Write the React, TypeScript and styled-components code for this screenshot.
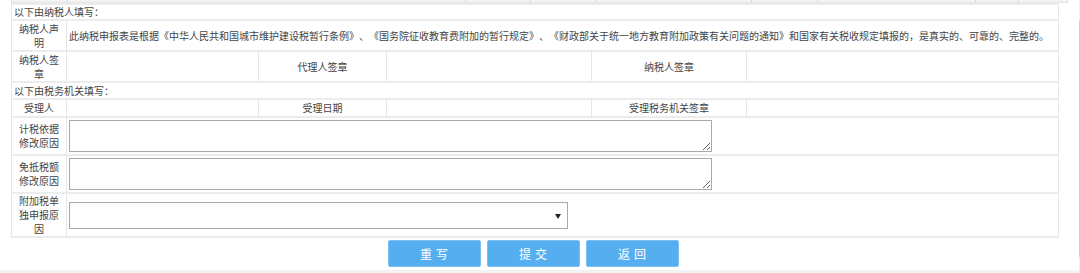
import React from "react";
import styled, { createGlobalStyle } from "styled-components";

const GlobalStyle = createGlobalStyle`
  html, body {
    margin: 0;
    padding: 0;
    background: #fff;
    overflow: hidden;
  }
  body {
    font-family: "Noto Sans CJK SC", "Noto Sans", sans-serif;
    color: #444;
    text-spacing-trim: space-all;
  }
`;

const colors = {
  line: "#e6e6e6",
  rowLine: "#ececec",
  outer: "#dcdcdc",
  field: "#a9a9a9",
  blue: "#55aef0",
};

const Page = styled.div`
  width: 1080px;
  height: 273px;
  display: flex;
  overflow: hidden;
`;

const Content = styled.div`
  flex: 1;
  display: flex;
  flex-direction: column;
  padding-left: 11px;
  padding-right: 11px;
`;

const PrevRow = styled.div`
  display: flex;
  height: 2px;
  background: #f3f3f3;
  border-bottom: 1px solid ${colors.line};
  border-left: 1px solid ${colors.outer};
  border-right: 1px solid ${colors.outer};
`;

const PrevCell = styled.div<{ $w: number }>`
  width: ${(p) => p.$w}px;
  flex: none;
  border-right: 1px solid #d8d8d8;
  &:last-child {
    border-right: none;
    flex: 1;
  }
`;

const Table = styled.table`
  width: 1048px;
  table-layout: fixed;
  border-collapse: collapse;
  font-size: 10px;
  line-height: 14px;
  border-left: 1px solid ${colors.outer};
  border-right: 1px solid ${colors.outer};
  border-bottom: 2px solid ${colors.rowLine};
`;

const Row = styled.tr<{ $h: number }>`
  height: ${(p) => p.$h}px;
`;

const Cell = styled.td<{ $align?: "left" | "center" }>`
  text-align: ${(p) => p.$align || "center"};
  vertical-align: middle;
  padding: 0 2px;
  border-left: 1px solid ${colors.line};
  border-right: 1px solid ${colors.line};
  border-top: 2px solid ${colors.rowLine};
  border-bottom: 2px solid ${colors.rowLine};
  white-space: nowrap;
  overflow: hidden;
`;

const Label = styled(Cell)`
  white-space: normal;
  padding: 0 3px;
  word-break: break-all;
  line-height: 14px;
`;

const Section = styled(Cell)`
  text-align: left;
  padding-left: 2px;
`;

const TextArea = styled.textarea`
  display: block;
  box-sizing: border-box;
  width: 643px;
  height: 32px;
  margin: 0;
  border: 1px solid ${colors.field};
  border-radius: 0;
  font: inherit;
  resize: both;
  background: #fff;
`;

const SelectWrap = styled.span`
  position: relative;
  display: block;
  width: 499px;
  height: 27px;
  &::after {
    content: "";
    position: absolute;
    right: 7px;
    top: 12px;
    border-left: 3px solid transparent;
    border-right: 3px solid transparent;
    border-top: 5px solid #222;
  }
`;

const Select = styled.select`
  appearance: none;
  box-sizing: border-box;
  width: 100%;
  height: 100%;
  margin: 0;
  border: 1px solid ${colors.field};
  border-radius: 0;
  background: #fff;
  font: inherit;
`;

const Actions = styled.div`
  display: flex;
  justify-content: center;
  gap: 6px;
  padding: 2px 0 3px;
  margin-left: -13px;
`;

const Button = styled.button`
  width: 93px;
  height: 27px;
  border: 1px solid #7cc0f3;
  border-radius: 2px;
  background: ${colors.blue};
  color: #fff;
  font-family: "Noto Sans CJK SC", sans-serif;
  font-size: 12px;
  letter-spacing: 4px;
  padding: 0 0 0 4px;
`;

const Footer = styled.div`
  flex: 1;
  margin: 0 -11px;
  background: #f3f3f3;
`;

const Scrollbar = styled.div`
  width: 10px;
  flex: none;
  background: #f1f1f1;
  display: flex;
  flex-direction: column;
  padding-top: 20px;
`;

const Thumb = styled.div`
  height: 237px;
  background: #c1c1c1;
  border-left: 1px solid #d0d0d0;
`;

const Arrow = styled.div`
  margin: 4px auto 0;
  width: 0;
  height: 0;
  border-left: 3px solid transparent;
  border-right: 3px solid transparent;
  border-top: 3px solid #a3a3a3;
`;

const prevWidths = [55, 397, 64, 64, 155, 65, 157, 42, 48];

const declaration =
  "此纳税申报表是根据《中华人民共和国城市维护建设税暂行条例》、《国务院征收教育费附加的暂行规定》、《财政部关于统一地方教育附加政策有关问题的通知》和国家有关税收规定填报的，是真实的、可靠的、完整的。";

const App: React.FC = () => {
  return (
    <>
      <GlobalStyle />
      <Page>
        <Content>
          <PrevRow>
            {prevWidths.map((w, i) => (
              <PrevCell key={i} $w={w} />
            ))}
          </PrevRow>
          <Table>
            <colgroup>
              <col style={{ width: 55 }} />
              <col style={{ width: 192 }} />
              <col style={{ width: 128 }} />
              <col style={{ width: 205 }} />
              <col style={{ width: 155 }} />
              <col />
            </colgroup>
            <tbody>
              <Row $h={16}>
                <Section colSpan={6}>以下由纳税人填写：</Section>
              </Row>
              <Row $h={31}>
                <Label>纳税人声明</Label>
                <Cell colSpan={5} $align="left">
                  {declaration}
                </Cell>
              </Row>
              <Row $h={31}>
                <Label>纳税人签章</Label>
                <Cell />
                <Cell>代理人签章</Cell>
                <Cell />
                <Cell>纳税人签章</Cell>
                <Cell />
              </Row>
              <Row $h={17}>
                <Section colSpan={6}>以下由税务机关填写：</Section>
              </Row>
              <Row $h={18}>
                <Label>受理人</Label>
                <Cell />
                <Cell>受理日期</Cell>
                <Cell />
                <Cell>受理税务机关签章</Cell>
                <Cell />
              </Row>
              <Row $h={38}>
                <Label>计税依据修改原因</Label>
                <Cell colSpan={5} $align="left">
                  <TextArea />
                </Cell>
              </Row>
              <Row $h={38}>
                <Label>免抵税额修改原因</Label>
                <Cell colSpan={5} $align="left">
                  <TextArea />
                </Cell>
              </Row>
              <Row $h={43}>
                <Label>附加税单独申报原因</Label>
                <Cell colSpan={5} $align="left">
                  <SelectWrap>
                    <Select defaultValue="">
                      <option value=""></option>
                    </Select>
                  </SelectWrap>
                </Cell>
              </Row>
            </tbody>
          </Table>
          <Actions>
            <Button>重写</Button>
            <Button>提交</Button>
            <Button>返回</Button>
          </Actions>
          <Footer />
        </Content>
        <Scrollbar>
          <Thumb />
          <Arrow />
        </Scrollbar>
      </Page>
    </>
  );
};

export default App;
